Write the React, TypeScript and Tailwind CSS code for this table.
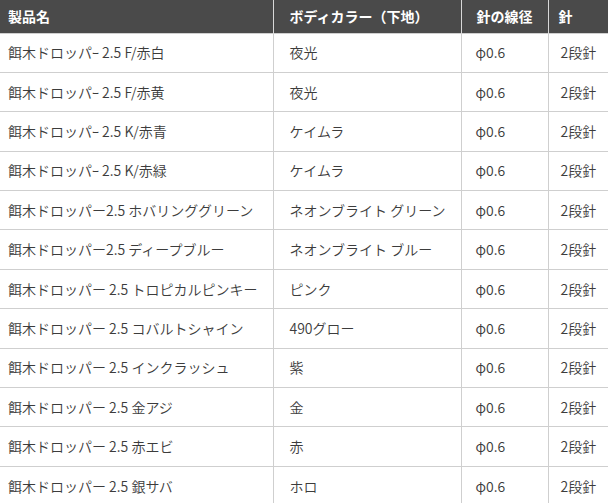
import React from 'react';

const rows: [string, string][] = [
  ['餌木ドロッパｰ 2.5 F/赤白', '夜光'],
  ['餌木ドロッパｰ 2.5 F/赤黄', '夜光'],
  ['餌木ドロッパｰ 2.5 K/赤青', 'ケイムラ'],
  ['餌木ドロッパｰ 2.5 K/赤緑', 'ケイムラ'],
  ['餌木ドロッパー2.5 ホバリンググリーン', 'ネオンブライト グリーン'],
  ['餌木ドロッパー2.5 ディープブルー', 'ネオンブライト ブルー'],
  ['餌木ドロッパー 2.5 トロピカルピンキー', 'ピンク'],
  ['餌木ドロッパー 2.5 コバルトシャイン', '490グロー'],
  ['餌木ドロッパー 2.5 インクラッシュ', '紫'],
  ['餌木ドロッパー 2.5 金アジ', '金'],
  ['餌木ドロッパー 2.5 赤エビ', '赤'],
  ['餌木ドロッパー 2.5 銀サバ', 'ホロ'],
];

const App: React.FC = () => {
  return (
    <div
      className="w-[608px] h-[503px] overflow-hidden bg-white text-[14px] text-[#3c3c3c] font-[350]"
      style={{ fontFamily: '"Noto Sans CJK JP", "Noto Sans", sans-serif' }}
    >
      <table className="border-collapse table-fixed w-[620px]">
        <colgroup>
          <col className="w-[273px]" />
          <col className="w-[188px]" />
          <col className="w-[87px]" />
          <col className="w-[72px]" />
        </colgroup>
        <thead>
          <tr className="bg-[#4a4a4a] text-white h-[33px]">
            <th className="text-left font-bold pl-2 border-r border-[#d8d8d8]">製品名</th>
            <th className="text-left font-bold pl-[16px] border-r border-[#d8d8d8]">ボディカラー（下地）</th>
            <th className="text-left font-bold pl-[15px] border-r border-[#d8d8d8]">針の線径</th>
            <th className="text-left font-bold pl-[10px]">針</th>
          </tr>
        </thead>
        <tbody>
          {rows.map(([name, color], i) => (
            <tr key={i} className="h-[39.4px] border-t border-[#cfcfcf]">
              <td className="pl-2 border-r border-[#cfcfcf]">{name}</td>
              <td className="pl-[16px] border-r border-[#cfcfcf]">{color}</td>
              <td className="pl-[14px] border-r border-[#cfcfcf]">φ0.6</td>
              <td className="pl-[12px]">2段針</td>
            </tr>
          ))}
        </tbody>
      </table>
    </div>
  );
};

export default App;
